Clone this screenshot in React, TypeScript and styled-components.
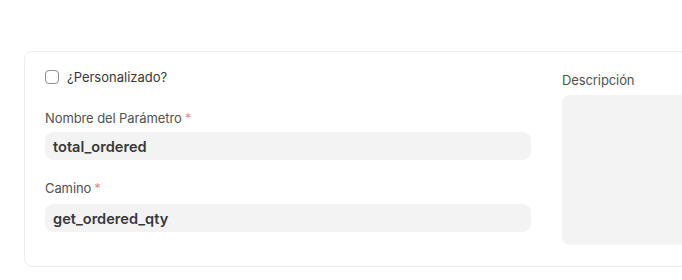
import styled, { createGlobalStyle } from 'styled-components';

const GlobalStyle = createGlobalStyle`
  html, body {
    margin: 0;
    padding: 0;
    background: #ffffff;
    overflow: hidden;
  }
  body {
    font-family: Inter, "Noto Sans", sans-serif;
    -webkit-font-smoothing: antialiased;
  }
`;

const Page = styled.div`
  width: 682px;
  height: 280px;
  overflow: hidden;
  padding: 51px 0 0 24px;
  box-sizing: border-box;
`;

const Card = styled.section`
  width: 1080px;
  height: 216px;
  box-sizing: border-box;
  border: 1px solid #ededed;
  border-radius: 8px;
  padding: 18px 20px 20px 20px;
  display: grid;
  grid-template-columns: 486px 486px;
  column-gap: 31px;
`;

const Column = styled.div`
  display: flex;
  flex-direction: column;
`;

const CheckRow = styled.label`
  display: flex;
  align-items: center;
  gap: 8px;
  height: 14px;
  margin-bottom: 26px;
  font-size: 13px;
  color: #383838;
`;

const Box = styled.span`
  width: 12px;
  height: 12px;
  border: 1px solid #8f8f8f;
  border-radius: 4px;
  background: #fff;
`;

const Field = styled.div<{ $gap?: number }>`
  display: flex;
  flex-direction: column;
  margin-bottom: ${p => p.$gap ?? 0}px;
`;

const Label = styled.div<{ $space?: number }>`
  font-size: 13px;
  line-height: 16px;
  color: #525252;
  margin-bottom: ${p => p.$space ?? 7}px;
  letter-spacing: -0.1px;
`;

const Req = styled.span`
  color: #e88b8b;
  margin-left: 3px;
`;

const Input = styled.div`
  height: 28px;
  box-sizing: border-box;
  border-radius: 8px;
  background: #f3f3f3;
  padding: 2px 8px 0 8px;
  display: flex;
  align-items: center;
  font-size: 14.6px;
  font-weight: 600;
  color: #383838;
`;

const DescLabel = styled(Label)`
  margin-top: 2px;
`;

const TextArea = styled.div`
  height: 150px;
  border-radius: 8px;
  background: #f3f3f3;
`;

export default function App() {
  return (
    <>
      <GlobalStyle />
      <Page>
        <Card>
          <Column>
            <CheckRow>
              <Box />
              ¿Personalizado?
            </CheckRow>
            <Field $gap={20}>
              <Label $space={6}>
                Nombre del Parámetro<Req>*</Req>
              </Label>
              <Input>total_ordered</Input>
            </Field>
            <Field>
              <Label $space={8}>
                Camino<Req>*</Req>
              </Label>
              <Input>get_ordered_qty</Input>
            </Field>
          </Column>
          <Column>
            <DescLabel $space={7}>Descripción</DescLabel>
            <TextArea />
          </Column>
        </Card>
      </Page>
    </>
  );
}
